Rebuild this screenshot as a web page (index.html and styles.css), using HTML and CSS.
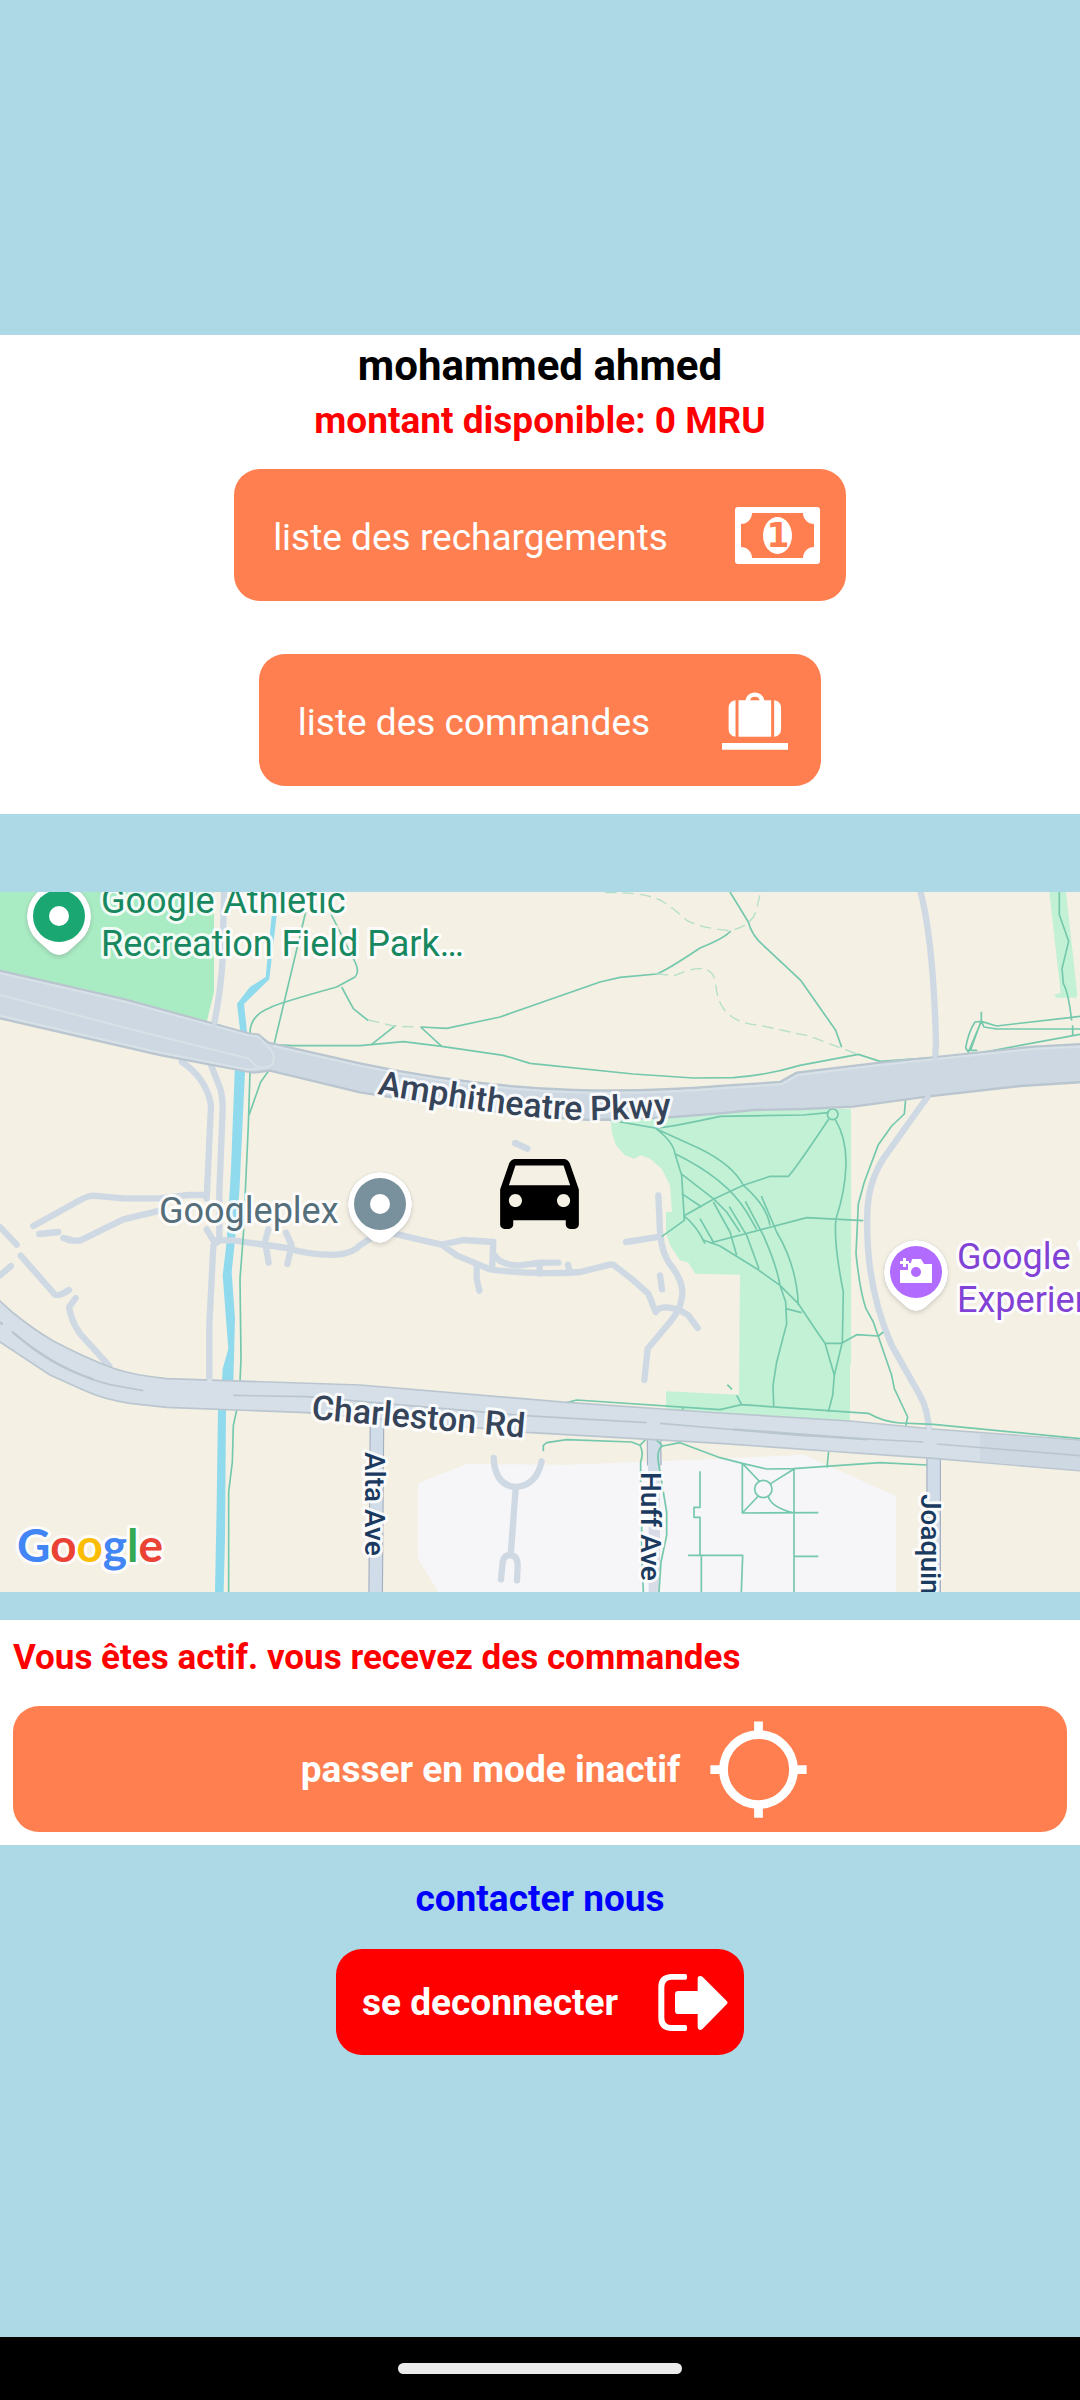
FILE: index.html
```html
<!DOCTYPE html>
<html lang="fr">
<head>
<meta charset="utf-8">
<meta name="viewport" content="width=device-width, initial-scale=1">
<title>Accueil chauffeur</title>
<link rel="stylesheet" href="styles.css">
</head>
<body>
<main class="screen">
  <section class="card account">
    <h1 class="name">mohammed ahmed</h1>
    <p class="balance">montant disponible: 0 MRU</p>
    <button class="btn btn-list" type="button">
      <span>liste des rechargements</span>
      <svg class="icon-money" viewBox="0 0 85 57" aria-hidden="true">
        <path fill="#fff" fill-rule="evenodd" d="M3 0H82Q85 0 85 3V54Q85 57 82 57H3Q0 57 0 54V3Q0 0 3 0ZM17 6A11 11 0 0 1 6 17V40A11 11 0 0 1 17 51H68A11 11 0 0 1 79 40V17A11 11 0 0 1 68 6Z"/>
        <ellipse cx="42.500" cy="28.500" rx="14.500" ry="18.500" fill="#fff"/>
        <text class="note-value" x="43" y="40" text-anchor="middle">1</text>
      </svg>
    </button>
    <button class="btn btn-list btn-orders" type="button">
      <span>liste des commandes</span>
      <svg class="icon-luggage" viewBox="0 0 200 180" aria-hidden="true" fill="#fff">
        <path fill-rule="evenodd" d="M50 30H71A29 29 0 0 1 128 30H149V141H50ZM85 30H114A15 14 0 0 0 85 30Z"/>
        <path d="M41 30V141Q20 138 20 118V53Q20 33 41 30ZM158 30V141Q179 138 179 118V53Q179 33 158 30ZM0 160H200V180H0Z"/>
      </svg>
    </button>
  </section>

  <section class="map" aria-label="Carte">
    <svg class="map-svg" viewBox="0 0 1080 700">
      <defs>
        <g id="pin">
          <path class="pin-shadow" d="M-32 0A32 32 0 1 1 32 0C32 10 28 18 22 24L10 35Q0 43-10 35L-22 24C-28 18-32 10-32 0Z"/>
          <path fill="#fff" d="M-32 0A32 32 0 1 1 32 0C32 10 28 18 22 24L10 35Q0 43-10 35L-22 24C-28 18-32 10-32 0Z"/>
        </g>
      </defs>
      <g transform="scale(.333333)">
        <!-- parks, campus and water -->
        <path fill="#a9ebc3" d="M0 0H642V300L620 390 0 240Z"/>
        <path fill="#c3f1d5" d="M1833 680L2150 650H2553V1415L2550 1420V1590L1998 1560V1498L2217 1508 2220 1148 2086 1145 2065 1112 2040 1105 2010 1060 1998 1020V960H2016L2010 880 1985 830 1950 800 1922 790 1903 800 1875 790 1848 760 1835 720Z"/>
        <path fill="#c3f1d5" d="M3148 0H3198L3232 310 3228 317H3170L3162 308 3182 303Z"/>
        <path fill="#f6f5f7" d="M1400 1716L1254 1774V2000L1315 2100H2688V1812L2412 1688 2160 1700 1700 1718Z"/>
        <path fill="#90daee" d="M822 0H838L808 262 732 336 742 430 735 540 718 900 704 1054 695 1140 705 1280 700 1470H666L668 1430 685 1370 668 1150 680 1050 693 830 704 540 722 430 711 335 750 285 797 255Z"/>
        <path fill="#90daee" d="M654 1550H678L675 1940 671 2100H645L650 1840Z"/>

        <!-- service roads -->
        <g class="lane">
          <path d="M672 0L668 200Q662 300 642 396"/>
          <path d="M545 509Q620 560 633 640L620 920M633 519L655 575Q668 600 668 650L658 900V1045L640 1060L628 1300V1470"/>
          <path d="M100 1002L230 930Q260 912 280 911L370 919H480L565 909H620M118 1026L175 1020M0 1005L50 1058M190 1038L210 1046H240L370 982 480 956M200 1040L215 1044"/>
          <path d="M620 1012L640 1045H700L860 1068Q930 1090 1010 1088Q1060 1084 1080 1060L1140 1020M805 1012L795 1050 806 1112M858 1022L875 1060 862 1116"/>
          <path d="M1120 1010Q1200 1030 1325 1058L1390 1044 1480 1050 1476 1132M1325 1058L1370 1090 1470 1132Q1600 1150 1740 1140L1830 1118H1840L1900 1165 1945 1205 1967 1260Q1980 1235 2040 1255M1709 1140L1704 1118M1430 1126V1160L1438 1196M1484 1090Q1500 1120 1560 1120L1620 1112H1675M1619 1115V1145M1980 1150L1986 1192"/>
          <path d="M1975 910L1980 1020Q1985 1090 2020 1130Q2055 1180 2045 1220Q2040 1260 1995 1308L1943 1370 1933 1464M2040 1255L2065 1270 2093 1308M1878 1050L1980 1034"/>
          <path d="M2762 0Q2800 150 2808 450L2806 494"/>
          <path d="M2782 615L2650 800Q2605 870 2602 960Q2595 1180 2675 1360L2760 1510Q2785 1555 2787 1620"/>
          <path d="M1545 753L1582 770"/>
          <path d="M62 1091L165 1208Q175 1215 207 1194M33 1122L0 1150M227 1218L207 1246Q215 1290 240 1325L328 1422"/>
          <path d="M1481 1698Q1485 1780 1547 1785Q1610 1780 1625 1708M1547 1790L1532 1990M1503 2062L1508 2010Q1512 1988 1532 1990Q1552 1990 1553 2020L1551 2065"/>
        </g>
        <g fill="none" stroke="#a5b0c2">
          <g stroke-width="44"><path d="M1131 1580L1127 2100M2801 1690V2100"/><path d="M1962 1630L1963 1720"/></g>
          <path stroke="#d8dce6" stroke-width="34" d="M1963 1700V2100"/>
          <g stroke="#d0dce7" stroke-width="37"><path d="M1131 1580L1127 2100M2801 1690V2100"/><path d="M1962 1630L1963 1740"/></g>
        </g>

        <!-- footpaths -->
        <g class="trail">
          <path d="M917 60L822 458 880 461H1080L1210 449 1325 463 1510 490 1590 514 1900 546 2080 558 2200 557Q2300 550 2400 520L2575 487 2640 508 2900 490 3240 427"/>
          <path d="M750 424Q750 370 810 347Q830 335 1010 285L1065 255Q1080 240 1065 210L990 60M1025 285L1060 350 1105 386M1115 457L1187 400M1262 405L1325 463M1262 405L1340 409 1500 375 1800 270 1860 256 1970 246Q2000 235 2100 168Q2175 138 2192 117"/>
          <path d="M2190 0L2245 90Q2255 130 2290 160L2403 266 2507 415 2525 466"/>
          <path d="M750 540L745 700 730 1030 720 1160 723 1400 720 1470M805 538L782 570 745 675M711 1550L700 1600 697 1710 686 1800V2100"/>
          <path d="M3178 0V68L3206 148 3186 230 3190 275Q3205 300 3215 386M2944 359V388L2925 390Q2905 420 2897 468L2905 480L2944 388 2990 402 3215 376 3240 373M2944 388L2952 405 2990 411H3240M3218 400V430M2900 475H2930L2912 474 2942 390"/>
          <path d="M1805 680L1965 708Q2010 706 2160 673L2410 669 2486 662M1968 710Q2020 750 2025 785L2045 850 2053 985 1985 1034M1968 710L2100 770Q2200 820 2230 880Q2300 940 2310 1000M2025 785Q2180 860 2240 960L2270 1012M2043 845L2140 920 2180 960 2220 1020M2045 905L2105 945M2055 970L2140 922 2230 880 2310 853H2365Q2380 840 2486 682M2050 970Q2090 1000 2115 1055"/>
          <circle cx="2498" cy="667" r="16"/>
          <path d="M2506 683Q2540 740 2538 820Q2535 900 2508 980Q2500 1050 2530 1200L2527 1350 2503 1450 2498 1510 2485 1560M2130 1053L2420 977 2590 986M2717 620L2713 666 2675 702 2635 758 2593 870 2575 935 2568 1085Q2580 1200 2598 1250L2620 1290 2675 1450 2683 1490 2723 1575 2717 1602"/>
          <path d="M2284 912L2330 1020Q2390 1120 2395 1240M2236 928L2290 1030Q2330 1120 2340 1180L2357 1230 2360 1295 2330 1410 2319 1480 2321 1542M2188 944L2240 1030 2277 1130M2140 930L2190 1020 2210 1090M2100 980L2140 1050M2110 1044L2160 1062 2270 1130 2340 1180 2395 1235 2445 1310 2475 1354 2503 1450M2358 1250L2405 1262M2475 1354H2525L2570 1328 2635 1332 2650 1320"/>
          <path d="M1700 1532L1730 1524 2160 1553 2225 1538 2605 1564Q2650 1590 2700 1593L2800 1597 3240 1640M2182 1478L2196 1492M2210 1510L2225 1538M2048 1546V1556"/>
          <path d="M1630 1678V1660L1640 1652 1700 1643 1895 1650 1920 1660 1942 1637M1920 1660Q1932 1680 1922 1710V1770M1925 1900V1980L1930 2100M1965 1640L1988 1662 2040 1652 2160 1697 2230 1715 2300 1731 2380 1730 2640 1712 2780 1719M1988 1662Q1970 1670 1975 1710L2000 1860V1930L1983 2010 1977 2100"/>
          <path d="M2486 1677L2481 1727M2227 1714V1863L2455 1862M2227 1714L2280 1770M2227 1863L2275 1812M2382 1731L2312 1775M2305 1812Q2310 1845 2382 1864M2382 1731V2100M2382 1993H2455M2100 1738V1846H2082V1876H2100V1990M2064 1990H2228L2224 2100M2104 1990V2100"/>
          <circle cx="2290" cy="1791" r="26"/>
        </g>
        <g class="trail dashed">
          <path d="M1105 384L1185 403 1262 405M1815 2Q1920 0 1970 20Q2000 30 2060 85Q2110 110 2192 116Q2260 100 2270 50L2282 0M1970 246L2025 250 2065 235Q2135 215 2147 270Q2150 340 2190 370Q2220 395 2280 400L2430 433 2570 486"/>
        </g>

        <!-- Amphitheatre Parkway -->
        <path fill="#ced8e2" stroke="#bac6cf" stroke-width="7" d="M-9 234L375 322 745 424 775 428 805 452 1080 514Q1400 582 1720 594Q1950 600 2160 582L2340 570 2390 542 2640 512 2800 496 3100 464 3250 456V570L3060 582 2780 614 2560 644 2410 651 2260 654 2160 664 1980 678 1780 684Q1600 678 1330 639L1080 601 810 536 760 542 480 489-9 377Z"/>
        <path fill="none" stroke="#d7e1e7" stroke-width="6" d="M0 243L375 329 745 430 775 434 810 470Q830 495 815 520Q790 535 765 520L745 499 440 424 0 309M0 371L480 482 745 533 800 526M820 462L1080 521Q1400 589 1720 601Q1950 607 2160 589L2345 577 2395 549 2640 519 3100 471 3240 464"/>
        <path class="mouth" d="M642 402L644 390M2806 506V488M2776 628L2784 612"/>

        <!-- Charleston Road -->
        <path fill="#d6dfe7" stroke="#bac6cf" stroke-width="5" d="M-9 1219L40 1263Q100 1312 160 1347Q250 1395 340 1429Q400 1450 500 1460L1080 1479 1700 1531 2160 1563 2550 1587 2800 1611 3250 1645V1737L2800 1699 2480 1677 2160 1654 1580 1621 920 1562 500 1546 390 1534Q310 1522 250 1494L150 1449-9 1344Z"/>
        <path fill="#ced8e3" d="M2940 1624L3240 1647V1733L2940 1709Z"/>
        <path fill="none" stroke="#bac6cf" stroke-width="5" d="M35 1318Q180 1440 330 1478L430 1496M700 1510L920 1514 1560 1570 1940 1592M1980 1594L2400 1630 2770 1650M2810 1656L3240 1691"/>
        <path fill="none" stroke="#bac6cf" stroke-width="7" d="M40 1322Q150 1420 280 1462M0 1290L8 1298M2200 1612L2600 1642"/>
        <path fill="none" stroke="#d8e1e9" stroke-width="14" d="M629 1472V1460M2787 1620V1600"/>
      </g>

      <!-- place and street labels -->
      <g class="label place">
        <g fill="#188860"><text x="101" y="21">Google Athletic</text><text x="101" y="64">Recreation Field Park…</text></g>
        <text x="159" y="331" fill="#546e7a">Googleplex</text>
        <g fill="#8142d5"><text x="957" y="377">Google Visitor</text><text x="957" y="420">Experience</text></g>
      </g>
      <g class="label road">
        <path id="amphi" fill="none" stroke="none" d="M377 202C440 213 540 230 600 228Q650 227 720 221"/>
        <text><textPath href="#amphi">Amphitheatre Pkwy</textPath></text>
        <text transform="translate(311 527) rotate(5)">Charleston Rd</text>
      </g>
      <g class="label street">
        <text transform="translate(365 560) rotate(90)">Alta Ave</text>
        <text transform="translate(641 580) rotate(90)">Huff Ave</text>
        <text transform="translate(921 602) rotate(90)">Joaquin Rd</text>
      </g>

      <!-- pins -->
      <g transform="translate(59 24)"><use href="#pin"/><circle r="26" fill="#1aa772"/><circle r="10" fill="#fff"/></g>
      <g transform="translate(380 312)"><use href="#pin"/><circle r="26" fill="#78919d"/><circle r="10" fill="#fff"/></g>
      <g transform="translate(916 380)"><use href="#pin"/><circle r="26" fill="#b26bff"/>
        <path fill="#fff" d="M-16-2H-8V-9H-5L-4-13H5L8-8H16V11H-16ZM-13-14H-10V-11H-7V-8H-10V-5H-13V-8H-16V-11H-13Z"/><circle r="5" fill="#b26bff"/></g>

      <path transform="translate(487 245) scale(4.375)" d="M18.920 6.010C18.720 5.420 18.160 5 17.500 5h-11c-.66 0-1.210.42-1.420 1.010L3 12v8c0 .55.45 1 1 1h1c.55 0 1-.45 1-1v-1h12v1c0 .55.45 1 1 1h1c.55 0 1-.45 1-1v-8l-2.080-5.990zM6.500 16c-.83 0-1.500-.67-1.500-1.500S5.670 13 6.500 13s1.500.67 1.500 1.500S7.330 16 6.500 16zm11 0c-.83 0-1.500-.67-1.500-1.500s.67-1.500 1.500-1.500 1.500.67 1.500 1.500-.67 1.500-1.500 1.500zM5 11l1.500-4.500h11L19 11H5z"/>

      <text class="label google" x="17" y="670"><tspan fill="#4285f4">G</tspan><tspan fill="#ea4335">o</tspan><tspan fill="#fbbc04">o</tspan><tspan fill="#4285f4">g</tspan><tspan fill="#34a853">l</tspan><tspan fill="#ea4335">e</tspan></text>
    </svg>
  </section>

  <section class="card status">
    <p class="status-text">Vous êtes actif. vous recevez des commandes</p>
    <button class="btn btn-mode" type="button">
      <span>passer en mode inactif</span>
      <svg class="icon-target" viewBox="0 0 24 24" aria-hidden="true" fill="none" stroke="#fff" stroke-width="2"><circle cx="12" cy="12" r="8"/><path d="M12 1V4M12 20V23M1 12H4M20 12H23"/></svg>
    </button>
  </section>

  <a class="contact" href="#contact">contacter nous</a>

  <button class="btn btn-logout" type="button">
    <span>se deconnecter</span>
    <svg class="icon-exit" viewBox="0 0 208 171" aria-hidden="true" fill="#fff">
      <path d="M37 0H81Q86 0 86 5V12Q86 17 81 17H40Q18 17 18 40V131Q18 153 40 153H81Q86 153 86 158V166Q86 171 81 171H37Q0 168 0 132V38Q0 3 37 0Z"/>
      <path d="M60 51H118V14Q118 6 125 6Q129 5 133 9L205 81Q210 86 205 91L133 164Q129 168 125 168Q118 167 118 160V120H60Q50 120 50 110V61Q50 51 60 51Z"/>
    </svg>
  </button>

  <footer class="navbar"><span class="handle"></span></footer>
</main>
</body>
</html>
```

FILE: styles.css
```css
* {
  box-sizing: border-box;
}

body {
  margin: 0;
  background: #add8e6;
  font-family: Roboto, "Liberation Sans", sans-serif;
}

.screen {
  display: flex;
  flex-direction: column;
  align-items: center;
  min-height: 100vh;
  padding-top: 335px;
}

.card {
  width: 100%;
  background: #fff;
}

.account {
  display: flex;
  flex-direction: column;
  align-items: center;
  padding-bottom: 28px;
}

.name,
.balance,
.status-text {
  margin: 0;
  font-weight: 700;
}

.name {
  font-size: 42px;
  line-height: 62px;
  color: #000;
}

.balance {
  margin-bottom: 24px;
  font-size: 37px;
  line-height: 48px;
  color: #f00;
}

.btn {
  display: flex;
  align-items: center;
  border: 0;
  border-radius: 26px;
  background: #ff7f50;
  color: #fff;
  font-family: inherit;
  font-size: 37px;
  font-weight: 700;
  line-height: 50px;
  cursor: pointer;
}

.btn span {
  padding-top: 2px;
}

.btn svg {
  flex: none;
}

.btn-list {
  gap: 67px;
  height: 132px;
  padding: 0 26px 0 39px;
  font-weight: 400;
}

.btn-list span {
  padding-top: 5px;
}

.btn-orders {
  gap: 72px;
  margin-top: 53px;
  padding-right: 33px;
}

.icon-money {
  width: 85px;
  height: 57px;
}

.note-value {
  font-family: "DejaVu Sans", sans-serif;
  font-size: 33px;
  font-weight: 700;
  fill: #ff7f50;
}

.icon-luggage {
  width: 66px;
  height: 60px;
}

.map {
  width: 100%;
  margin: 78px 0 28px;
  background: #f4f0e4;
}

.map-svg {
  display: block;
  width: 100%;
  overflow: hidden;
}

.lane,
.mouth {
  fill: none;
  stroke: #cfd9e4;
  stroke-width: 19px;
  stroke-linecap: round;
  stroke-linejoin: round;
}

.mouth {
  stroke-width: 14px;
}

.trail {
  fill: none;
  stroke: #74c8ac;
  stroke-width: 5px;
  stroke-linejoin: round;
}

.dashed {
  stroke: #b4dfc8;
  stroke-width: 4px;
  stroke-dasharray: 34 18;
}

.label {
  paint-order: stroke;
  stroke: #fffd;
  stroke-width: 6px;
  stroke-linejoin: round;
}

.place {
  font-size: 36px;
}

.road {
  font-size: 34px;
  font-weight: 500;
  fill: #364459;
}

.street {
  font-size: 28px;
  font-weight: 500;
  fill: #1b3a5f;
}

.google {
  font-family: Lato, sans-serif;
  font-size: 46px;
  font-weight: 700;
}

.pin-shadow {
  fill: #0005;
  filter: drop-shadow(0 2px 2px #0006);
}

.status {
  padding: 13px;
}

.status-text {
  margin-bottom: 23px;
  font-size: 35px;
  line-height: 50px;
  color: #f00;
}

.btn-mode {
  justify-content: center;
  gap: 26px;
  width: 100%;
  height: 126px;
  padding: 0 0 0 32px;
}

.icon-target {
  width: 105px;
  height: 105px;
}

.contact {
  margin: 29px 0 25px;
  font-size: 37px;
  font-weight: 700;
  line-height: 50px;
  color: #00f;
  text-decoration: none;
}

.btn-logout {
  gap: 40px;
  height: 106px;
  padding: 0 16px 0 26px;
  background: #f00;
}

.icon-exit {
  width: 70px;
  height: 57px;
}

.navbar {
  display: flex;
  align-items: center;
  justify-content: center;
  width: 100%;
  height: 63px;
  margin-top: auto;
  background: #000;
}

.handle {
  width: 284px;
  height: 11px;
  border-radius: 6px;
  background: #ebebeb;
}
```
